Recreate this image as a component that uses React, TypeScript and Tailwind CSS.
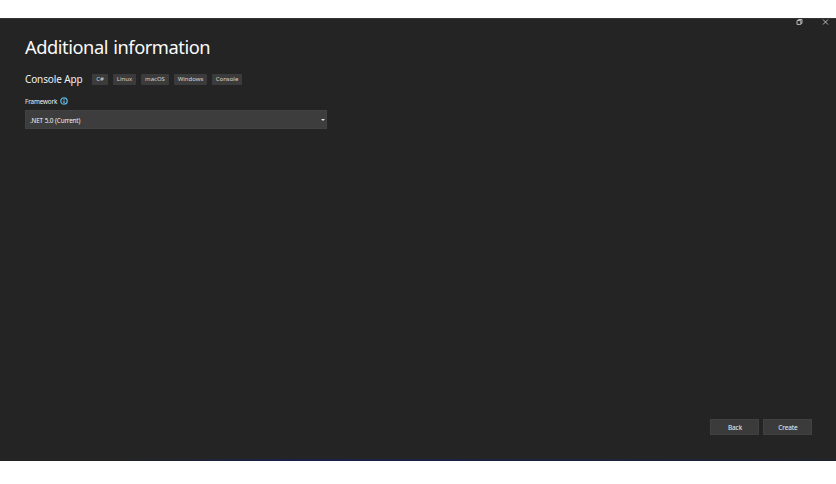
import React from "react";

const tags = [
  { label: "C#", box: "w-4" },
  { label: "Linux", box: "w-[23px]" },
  { label: "macOS", box: "w-7" },
  { label: "Windows", box: "w-[33px]" },
  { label: "Console", box: "w-[30px]" },
];

function TitleBar() {
  return (
    <div className="flex h-[10px] items-start justify-end pr-[7px] text-[#c8c8c8]">
      <svg className="mr-[19px]" width="7" height="6" viewBox="0 0 7 6" fill="none" stroke="currentColor" strokeWidth="0.9">
        <path d="M1 1.6H4.8V5.4H1ZM2.3 1.5V0.5H6V4.3H5" />
      </svg>
      <svg width="7" height="6" viewBox="0 0 7 6" fill="none" stroke="currentColor" strokeWidth="0.9">
        <path d="M1 0.5L6 5.5M6 0.5L1 5.5" />
      </svg>
    </div>
  );
}

export default function App() {
  return (
    <div className="flex h-[484px] w-[836px] flex-col bg-white font-['Noto_Sans','Open_Sans',sans-serif]">
      <div className="mt-[18px] flex h-[443px] flex-col border-t border-[#343434] bg-[#242424] text-[#f0f0f0]">
        <TitleBar />
        <main className="flex flex-1 flex-col pl-[25px]">
          <h1 className="mt-[6px] h-6 text-[18.3px] leading-6 tracking-[-0.46px] [word-spacing:1px] whitespace-nowrap text-[#fafafa]">Additional information</h1>
          <div className="mt-[14px] flex h-3 items-center">
            <h2 className="w-[67px] text-[10px] leading-3 tracking-[-0.13px] whitespace-nowrap">Console App</h2>
            <div className="flex gap-[5px]">
              {tags.map((t) => (
                <span key={t.label} className={`flex h-[11px] items-center justify-center rounded-[1px] bg-[#3b3b3b] text-[6px] leading-none whitespace-nowrap text-[#d6d6d6] ${t.box}`}>
                  {t.label}
                </span>
              ))}
            </div>
          </div>
          <div className="mt-[11px] flex h-[10px] items-center gap-[3px]">
            <label className="pt-px text-[6.3px] leading-[10px] tracking-[-0.13px]">Framework</label>
            <svg width="8" height="8" viewBox="0 0 8 8" fill="none">
              <circle cx="4" cy="4" r="3.2" stroke="#58b4dc" strokeWidth="1.3" />
              <path d="M4 3.4V6M4 2V2.8" stroke="#8fd0ee" strokeWidth="1.1" />
            </svg>
          </div>
          <div className="mt-[4px] flex h-[19px] w-[302px] items-center justify-between border border-[#424242] bg-[#3d3d3d] pr-px pl-1">
            <span className="pt-[3px] text-[6.3px] leading-none tracking-[-0.15px] [word-spacing:0.4px]">.NET 5.0 (Current)</span>
            <svg width="4" height="2" viewBox="0 0 4 2"><path d="M0 0H4L2 2Z" fill="#e0e0e0" /></svg>
          </div>
        </main>
        <footer className="flex h-10 justify-end gap-1 pr-6 text-[6.5px] tracking-[-0.1px]">
          <button className="h-4 w-[49px] border border-[#414141] bg-[#3b3b3b] pt-0.5 pl-px leading-none">Back</button>
          <button className="h-4 w-[49px] border border-[#414141] bg-[#3b3b3b] pt-0.5 pl-px leading-none">Create</button>
        </footer>
        <div className="h-0.5 shrink-0 bg-linear-to-r from-[#222426] from-15% via-[#1a2149] via-35% to-[#1e2430]" />
      </div>
    </div>
  );
}
